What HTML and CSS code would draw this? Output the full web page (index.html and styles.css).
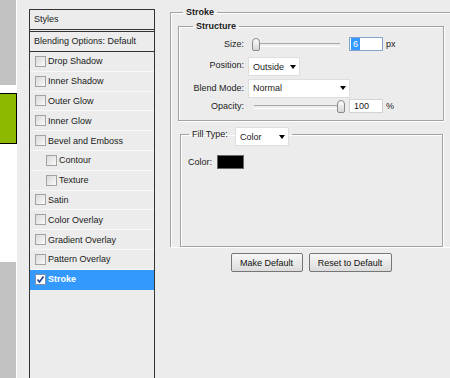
FILE: index.html
```html
<!DOCTYPE html>
<html lang="en">
<head>
    <meta charset="UTF-8">
    <meta name="viewport" content="width=device-width, initial-scale=1.0">
    <title>Layer Style - Stroke</title>
    <link rel="stylesheet" href="styles.css">
</head>
<body>
    <div class="doc">
        <div class="doc-gray"></div>
        <div class="doc-white"></div>
        <div class="doc-green"></div>
        <div class="doc-white tall"></div>
        <div class="doc-gray rest"></div>
    </div>

    <div class="styles">
        <div class="styles-head">Styles</div>
        <div class="styles-blend">Blending Options: Default</div>
        <ul class="effects">
            <li><span class="check"></span>Drop Shadow</li>
            <li><span class="check"></span>Inner Shadow</li>
            <li><span class="check"></span>Outer Glow</li>
            <li><span class="check"></span>Inner Glow</li>
            <li><span class="check"></span>Bevel and Emboss</li>
            <li class="sub"><span class="check"></span>Contour</li>
            <li class="sub"><span class="check"></span>Texture</li>
            <li><span class="check"></span>Satin</li>
            <li><span class="check"></span>Color Overlay</li>
            <li><span class="check"></span>Gradient Overlay</li>
            <li><span class="check"></span>Pattern Overlay</li>
            <li class="active">
                <span class="check on">
                    <svg width="9" height="9" viewBox="0 0 9 9"><polyline points="1.5,4.5 3.5,7 7.5,1.5" fill="none" stroke="#1d3c8f" stroke-width="1.6"/></svg>
                </span>Stroke
            </li>
        </ul>
    </div>

    <div class="panel">
        <fieldset class="group outer">
            <legend>Stroke</legend>

            <fieldset class="group structure">
                <legend>Structure</legend>
                <div class="rows">
                    <span class="lbl">Size:</span>
                    <div class="ctl">
                        <div class="slider"><span class="thumb min"></span></div>
                        <span class="field focus"><span class="sel">6</span></span>
                        <span class="unit">px</span>
                    </div>

                    <span class="lbl up">Position:</span>
                    <div class="ctl">
                        <span class="select pos">Outside</span>
                    </div>

                    <span class="lbl">Blend Mode:</span>
                    <div class="ctl">
                        <span class="select blend">Normal</span>
                    </div>

                    <span class="lbl">Opacity:</span>
                    <div class="ctl">
                        <div class="slider"><span class="thumb max"></span></div>
                        <span class="field">100</span>
                        <span class="unit">%</span>
                    </div>
                </div>
            </fieldset>

            <fieldset class="group fill">
                <legend><span class="fill-lbl">Fill Type:</span><span class="select kind">Color</span></legend>
                <div class="color-row">
                    <span class="color-lbl">Color:</span>
                    <span class="swatch"></span>
                </div>
            </fieldset>
        </fieldset>

        <div class="buttons">
            <button class="btn make">Make Default</button>
            <button class="btn reset">Reset to Default</button>
        </div>
    </div>
</body>
</html>
```

FILE: styles.css
```css
*{
    box-sizing: border-box;
}
body{
    margin: 0;
    height: 378px;
    overflow: hidden;
    display: flex;
    background-color: #ececec;
    font-family: "Liberation Sans", Arial, sans-serif;
    font-size: 9px;
    color: #1a1a1a;
}

/* document window peeking in at the left */
.doc{
    width: 17px;
    flex-shrink: 0;
    display: flex;
    flex-direction: column;
}
.doc-gray{
    height: 85px;
    background-color: #c2c2c2;
    border-right: 1px solid #fff;
}
.doc-white{
    height: 8px;
    background-color: #fff;
}
.doc-green{
    height: 51px;
    background-color: #8cb900;
    border: 1px solid #000;
    border-left: 0;
}
.doc-white.tall{
    height: 118px;
}
.doc-gray.rest{
    flex: 1;
}

/* styles list */
.styles{
    width: 126px;
    flex-shrink: 0;
    margin: 9px 0 0 12px;
    border: 1px solid #333;
    border-bottom: 0;
}
.styles-head{
    height: 22px;
    line-height: 19px;
    padding-left: 4px;
    border-bottom: 3px double #333;
}
.styles-blend{
    height: 20px;
    line-height: 19px;
    padding-left: 4px;
    border-bottom: 1px solid #333;
}
.effects{
    list-style: none;
    margin: 0;
    padding: 0;
}
.effects li{
    height: 19.8px;
    display: flex;
    align-items: center;
    padding-left: 5px;
    border-bottom: 1px solid #f8f8f8;
}
.effects li.sub{
    padding-left: 16px;
}
.effects li.active{
    background-color: #3399ff;
    border-bottom-color: #3399ff;
    color: #fff;
    font-weight: bold;
}
.check{
    width: 11px;
    height: 11px;
    margin-right: 2px;
    border: 1px solid #a3a3a3;
    background: linear-gradient(135deg, #d9d9d9, #fafafa);
    display: flex;
    align-items: center;
    justify-content: center;
}
.check.on{
    background: #fff;
    border-color: #8090a8;
}

/* right side */
.panel{
    flex: 1;
    min-width: 0;
    padding: 6px 0 0 15px;
}
.group{
    margin: 0;
    border: 1px solid #a2a2a2;
    box-shadow: inset 1px 1px 0 #fff, 1px 1px 0 #fff;
}
.group legend{
    padding: 0 3px;
    line-height: 12px;
    font-weight: bold;
}
.outer{
    margin-right: -10px;
    padding: 2px 0 0 7px;
    border-bottom: 0;
}
.outer > legend{
    margin-left: 5px;
}
.structure{
    width: 266px;
    padding: 1px 0 6px 0;
}
.structure > legend{
    margin-left: 14px;
}
.rows{
    display: grid;
    grid-template-columns: 65px 1fr;
    grid-template-rows: 22px 23px 20px 16px;
    column-gap: 4px;
    align-items: center;
}
.lbl{
    text-align: right;
    color: #222;
}
.lbl.up{
    margin-bottom: 4px;
}
.ctl{
    display: flex;
    align-items: center;
}
.slider{
    position: relative;
    width: 89px;
    height: 14px;
    margin-left: 4px;
}
.slider::before{
    content: "";
    position: absolute;
    left: 2px;
    right: 1px;
    top: 6px;
    height: 2px;
    border-top: 1px solid #a8a8a8;
    border-bottom: 1px solid #fff;
}
.thumb{
    position: absolute;
    top: 1px;
    width: 8px;
    height: 13px;
    border: 1px solid #8a8a8a;
    border-radius: 4px 4px 2px 2px;
    background: linear-gradient(#fdfdfd, #d6d6d6);
}
.thumb.min{
    left: 0;
}
.thumb.max{
    left: 85px;
}
.field{
    width: 34px;
    height: 14px;
    margin-left: 8px;
    padding-left: 4px;
    line-height: 12px;
    background-color: #fff;
    border: 1px solid #d2d2d2;
}
.field.focus{
    border-color: #86a3cc;
    padding-left: 1px;
}
.sel{
    display: inline-block;
    padding: 0 2px;
    background-color: #3399ff;
    color: #fff;
}
.unit{
    margin-left: 3px;
}
.select{
    height: 19px;
    display: inline-flex;
    align-items: center;
    justify-content: space-between;
    padding: 0 3px 0 4px;
    background-color: #fff;
    border: 1px solid #dedede;
    font-weight: normal;
}
.select::after{
    content: "";
    border-left: 3.5px solid transparent;
    border-right: 3.5px solid transparent;
    border-top: 4px solid #000;
}
.select.pos{
    width: 52px;
}
.select.blend{
    width: 102px;
}
.select.kind{
    width: 54px;
    vertical-align: top;
    margin-bottom: -5px;
}
.fill{
    width: 263px;
    height: 120px;
    margin: 6px 0 0 2px;
    padding: 14px 0 0 7px;
}
.fill > legend{
    margin-left: 1px;
    line-height: 14px;
    font-weight: normal;
}
.fill-lbl{
    display: inline-block;
    width: 43px;
}
.color-row{
    display: flex;
    align-items: center;
}
.color-lbl{
    width: 29px;
}
.swatch{
    width: 27px;
    height: 14px;
    background-color: #000;
    border: 1px solid #666;
}
.buttons{
    width: 266px;
    margin: 6px 0 0 8px;
    display: flex;
    justify-content: center;
    gap: 6px;
}
.btn{
    height: 19px;
    padding: 0;
    font: inherit;
    color: #111;
    border: 1px solid #767676;
    border-radius: 2px;
    background: linear-gradient(#f7f7f7, #dcdcdc);
}
.btn.make{
    width: 72px;
}
.btn.reset{
    width: 83px;
}
```
